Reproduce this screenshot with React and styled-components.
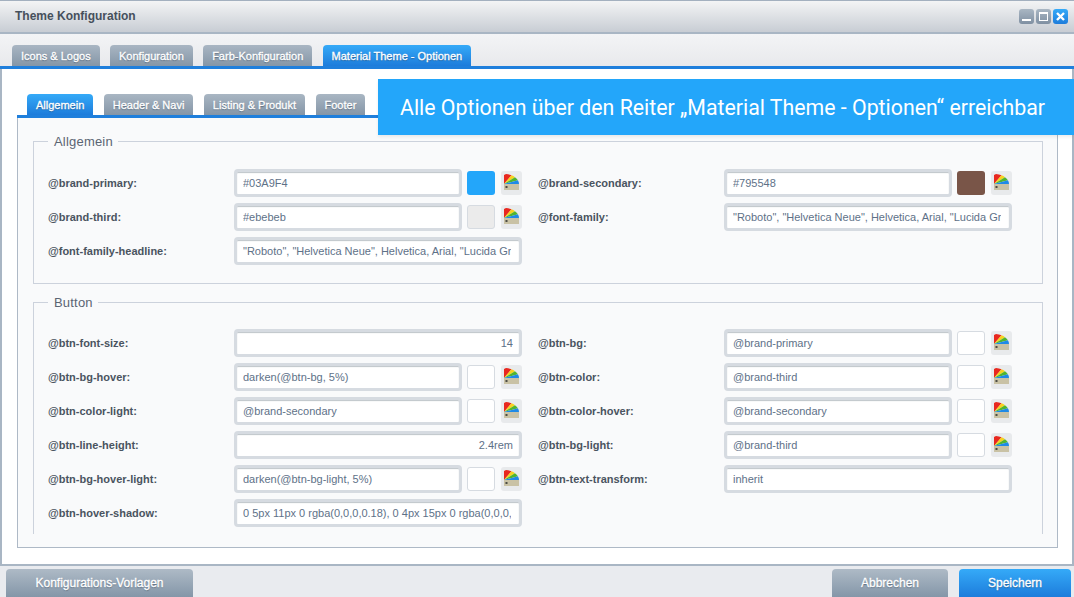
import React from "react";
import styled, { createGlobalStyle } from "styled-components";

const GlobalStyle = createGlobalStyle`
    html, body {
        margin: 0;
        padding: 0;
        height: 100%;
        overflow: hidden;
    }
    body {
        font-family: "Liberation Sans", Arial, sans-serif;
        background: #e9ebef;
    }
`;

const Page = styled.div`
    width: 1074px;
    height: 597px;
    display: flex;
    flex-direction: column;
    overflow: hidden;
`;

const TitleBar = styled.div`
    height: 32px;
    flex: none;
    box-sizing: border-box;
    border-top: 1px solid #a3b0bf;
    background: linear-gradient(#f3f4f5, #c8cdd4);
    display: flex;
    align-items: center;
    justify-content: space-between;
    padding: 0 6px 1px 15px;
`;

const Title = styled.div`
    font-size: 12px;
    font-weight: bold;
    color: #46505c;
`;

const WindowControls = styled.div`
    display: flex;
    gap: 2px;
`;

const WindowButton = styled.div`
    width: 15px;
    height: 15px;
    border-radius: 3px;
    background: ${({ $active }) =>
        $active
            ? "linear-gradient(#35aaf8, #1d7cdb)"
            : "linear-gradient(#a9b6c3, #7f90a2)"};
    display: flex;
    align-items: center;
    justify-content: center;
`;

const Body = styled.div`
    flex: 1;
    min-height: 0;
    display: flex;
    flex-direction: column;
    box-sizing: border-box;
    border: 2px solid #a9b6c4;
`;

const MainTabStrip = styled.div`
    flex: none;
    display: flex;
    gap: 10.3px;
    padding: 11px 0 0 12px;
    margin: 0 -2px;
    border-bottom: 3px solid #1f7fdc;
    background: linear-gradient(#f3f4f6, #e8e9ec);
`;

const Tab = styled.div`
    height: 21px;
    box-sizing: border-box;
    padding: 0 9px;
    border-radius: 4px 4px 0 0;
    display: flex;
    align-items: center;
    font-size: 11px;
    color: #fff;
    white-space: nowrap;
    -webkit-text-stroke: 0.3px #fff;
    text-shadow: 0 1px 1px rgba(50, 65, 85, 0.55);
    background: ${({ $active }) =>
        $active
            ? "linear-gradient(#35aaf8, #1d7cdb)"
            : "linear-gradient(#a9b6c3, #8596a7)"};
`;

const Content = styled.div`
    position: relative;
    flex: 1;
    min-height: 0;
    display: flex;
    flex-direction: column;
    background: #fff;
    padding: 25px 14px 16px 15px;
`;

const Callout = styled.div`
    position: absolute;
    top: 10px;
    left: 376px;
    right: -2px;
    height: 56px;
    display: flex;
    align-items: center;
    padding-left: 22px;
    background: #23a6fa;
    box-shadow: 0 2px 3px rgba(0, 0, 0, 0.07);
    color: #fff;
    font-family: Roboto, sans-serif;
    font-size: 21.3px;
    white-space: nowrap;
`;

const SubTabStrip = styled.div`
    flex: none;
    display: flex;
    gap: 10.5px;
    padding-left: 10px;
    border-bottom: 3px solid #1f7fdc;
`;

const Panel = styled.div`
    flex: 1;
    min-height: 0;
    overflow: hidden;
    background: #f9fafb;
    border: 1px solid #aeb9c6;
    border-top: none;
    padding: 16px 14px 0 15px;
    display: flex;
    flex-direction: column;
    gap: 11px;
`;

const Group = styled.fieldset`
    margin: 0;
    min-width: 0;
    box-sizing: border-box;
    height: ${({ $height }) => $height}px;
    flex: none;
    border: 1px solid #ccd2dc;
    border-bottom: ${({ $open }) => ($open ? "none" : "1px solid #ccd2dc")};
    padding: ${({ $top }) => $top}px 0 0 14px;
`;

const Legend = styled.legend`
    padding: 0 5px 0 6px;
    font-size: 13px;
    line-height: 15px;
    color: #5b6573;
    letter-spacing: 0.2px;
`;

const FieldGrid = styled.div`
    display: grid;
    width: 990px;
    grid-template-columns: 474px 473px;
    column-gap: 16px;
    grid-auto-rows: 28px;
    row-gap: 6px;
`;

const Field = styled.div`
    display: flex;
    align-items: center;
`;

const Label = styled.label`
    width: 186px;
    flex: none;
    font-size: 11px;
    font-weight: bold;
    color: #4a5460;
`;

const InputFrame = styled.div`
    box-sizing: border-box;
    height: 28px;
    width: ${({ $wide }) => ($wide ? 288 : 228)}px;
    flex: none;
    border: 3px solid #d6dbe1;
    border-radius: 4px;
    background: #fff;
    box-shadow: inset 0 1px 1px rgba(70, 85, 100, 0.35);
`;

const TextInput = styled.input`
    box-sizing: border-box;
    width: 100%;
    height: 100%;
    border: none;
    outline: none;
    background: transparent;
    padding: 0 ${({ $right }) => ($right ? 6 : 8)}px 0 6px;
    font-family: "Liberation Sans", Arial, sans-serif;
    font-size: 11px;
    color: #5e7188;
    text-align: ${({ $right }) => ($right ? "right" : "left")};
`;

const ColorPart = styled.div`
    display: flex;
    align-items: center;
    margin-left: 5px;
    gap: 6px;
`;

const Swatch = styled.div`
    box-sizing: border-box;
    width: 28px;
    height: 24px;
    border-radius: 3px;
    border: 1px solid ${({ $empty }) => ($empty ? "#d6dbe1" : "transparent")};
    background: ${({ $color }) => $color};
`;

const PickerButton = styled.div`
    box-sizing: border-box;
    width: 21px;
    height: 24px;
    padding-top: 3px;
    border-radius: 3px;
    background: #e8eaec;
    display: flex;
    justify-content: center;
`;

const Footer = styled.div`
    flex: none;
    height: 31px;
    display: flex;
    align-items: flex-end;
    justify-content: space-between;
    padding: 0 3px 0 6px;
    background: #e9ebef;
`;

const FooterRight = styled.div`
    display: flex;
    gap: 11px;
`;

const FooterButton = styled.div`
    width: ${({ $width }) => $width}px;
    height: 28px;
    border-radius: 4px 4px 0 0;
    display: flex;
    align-items: center;
    justify-content: center;
    font-size: 12px;
    color: #fff;
    -webkit-text-stroke: 0.3px #fff;
    text-shadow: 0 1px 1px rgba(50, 65, 85, 0.55);
    background: ${({ $primary }) =>
        $primary
            ? "linear-gradient(#35aaf8, #1d7cdb)"
            : "linear-gradient(#aebac6, #8496a8)"};
`;

const FanIcon = () => (
    <svg width="17" height="16" viewBox="0 0 17 16">
        <rect x="1" y="10" width="15" height="6" fill="#c9c2a5" />
        <rect x="2.5" y="12" width="2" height="2" fill="#4c4c44" />
        <path d="M1 10 L1 1 L3 0 A15 10 0 0 1 8.5 1.3 Z" fill="#e8281f" />
        <path d="M1 10 L8.5 1.3 A15 10 0 0 1 12 3.2 Z" fill="#f7d21e" />
        <path d="M1 10 L12 3.2 A15 10 0 0 1 14.9 6.2 Z" fill="#4fb52f" />
        <path d="M1 10 L14.9 6.2 A15 10 0 0 1 16 10 Z" fill="#1f8ae6" />
    </svg>
);

const MinimizeIcon = () => (
    <svg width="11" height="11" viewBox="0 0 11 11">
        <rect x="1" y="8" width="9" height="2" fill="#fff" />
    </svg>
);

const MaximizeIcon = () => (
    <svg width="11" height="11" viewBox="0 0 11 11">
        <rect x="1.5" y="1.5" width="8" height="8" fill="none" stroke="#fff" strokeWidth="1" />
        <rect x="1" y="1" width="9" height="2" fill="#fff" />
    </svg>
);

const CloseIcon = () => (
    <svg width="11" height="11" viewBox="0 0 11 11">
        <path d="M2 2 L9 9 M9 2 L2 9" stroke="#fff" strokeWidth="2.4" />
    </svg>
);

const ConfigField = ({ label, value, color, wide, right }) => (
    <Field>
        <Label>{label}</Label>
        <InputFrame $wide={wide}>
            <TextInput defaultValue={value} $right={right} />
        </InputFrame>
        {!wide && (
            <ColorPart>
                <Swatch $color={color || "#fff"} $empty={!color || color === "#ebebeb"} />
                <PickerButton>
                    <FanIcon />
                </PickerButton>
            </ColorPart>
        )}
    </Field>
);

const FONT_STACK = '"Roboto", "Helvetica Neue", Helvetica, Arial, "Lucida Grande"';

const App = () => (
    <Page>
        <GlobalStyle />
        <TitleBar>
            <Title>Theme Konfiguration</Title>
            <WindowControls>
                <WindowButton>
                    <MinimizeIcon />
                </WindowButton>
                <WindowButton>
                    <MaximizeIcon />
                </WindowButton>
                <WindowButton $active>
                    <CloseIcon />
                </WindowButton>
            </WindowControls>
        </TitleBar>
        <Body>
            <MainTabStrip>
                <Tab>Icons &amp; Logos</Tab>
                <Tab>Konfiguration</Tab>
                <Tab>Farb-Konfiguration</Tab>
                <Tab $active>Material Theme - Optionen</Tab>
            </MainTabStrip>
            <Content>
                <Callout>Alle Optionen über den Reiter „Material Theme - Optionen“ erreichbar</Callout>
                <SubTabStrip>
                    <Tab $active>Allgemein</Tab>
                    <Tab>Header &amp; Navi</Tab>
                    <Tab>Listing &amp; Produkt</Tab>
                    <Tab>Footer</Tab>
                </SubTabStrip>
                <Panel>
                    <Group $height={150} $top={20}>
                        <Legend>Allgemein</Legend>
                        <FieldGrid>
                            <ConfigField label="@brand-primary:" value="#03A9F4" color="#23a6fa" />
                            <ConfigField label="@brand-secondary:" value="#795548" color="#795548" />
                            <ConfigField label="@brand-third:" value="#ebebeb" color="#ebebeb" />
                            <ConfigField label="@font-family:" value={FONT_STACK} wide />
                            <ConfigField label="@font-family-headline:" value={FONT_STACK} wide />
                        </FieldGrid>
                    </Group>
                    <Group $height={239} $top={19} $open>
                        <Legend>Button</Legend>
                        <FieldGrid>
                            <ConfigField label="@btn-font-size:" value="14" wide right />
                            <ConfigField label="@btn-bg:" value="@brand-primary" />
                            <ConfigField label="@btn-bg-hover:" value="darken(@btn-bg, 5%)" />
                            <ConfigField label="@btn-color:" value="@brand-third" />
                            <ConfigField label="@btn-color-light:" value="@brand-secondary" />
                            <ConfigField label="@btn-color-hover:" value="@brand-secondary" />
                            <ConfigField label="@btn-line-height:" value="2.4rem" wide right />
                            <ConfigField label="@btn-bg-light:" value="@brand-third" />
                            <ConfigField label="@btn-bg-hover-light:" value="darken(@btn-bg-light, 5%)" />
                            <ConfigField label="@btn-text-transform:" value="inherit" wide />
                            <ConfigField
                                label="@btn-hover-shadow:"
                                value="0 5px 11px 0 rgba(0,0,0,0.18), 0 4px 15px 0 rgba(0,0,0,0.15)"
                                wide
                            />
                        </FieldGrid>
                    </Group>
                </Panel>
            </Content>
        </Body>
        <Footer>
            <FooterButton $width={187}>Konfigurations-Vorlagen</FooterButton>
            <FooterRight>
                <FooterButton $width={116}>Abbrechen</FooterButton>
                <FooterButton $width={112} $primary>
                    Speichern
                </FooterButton>
            </FooterRight>
        </Footer>
    </Page>
);

export default App;
